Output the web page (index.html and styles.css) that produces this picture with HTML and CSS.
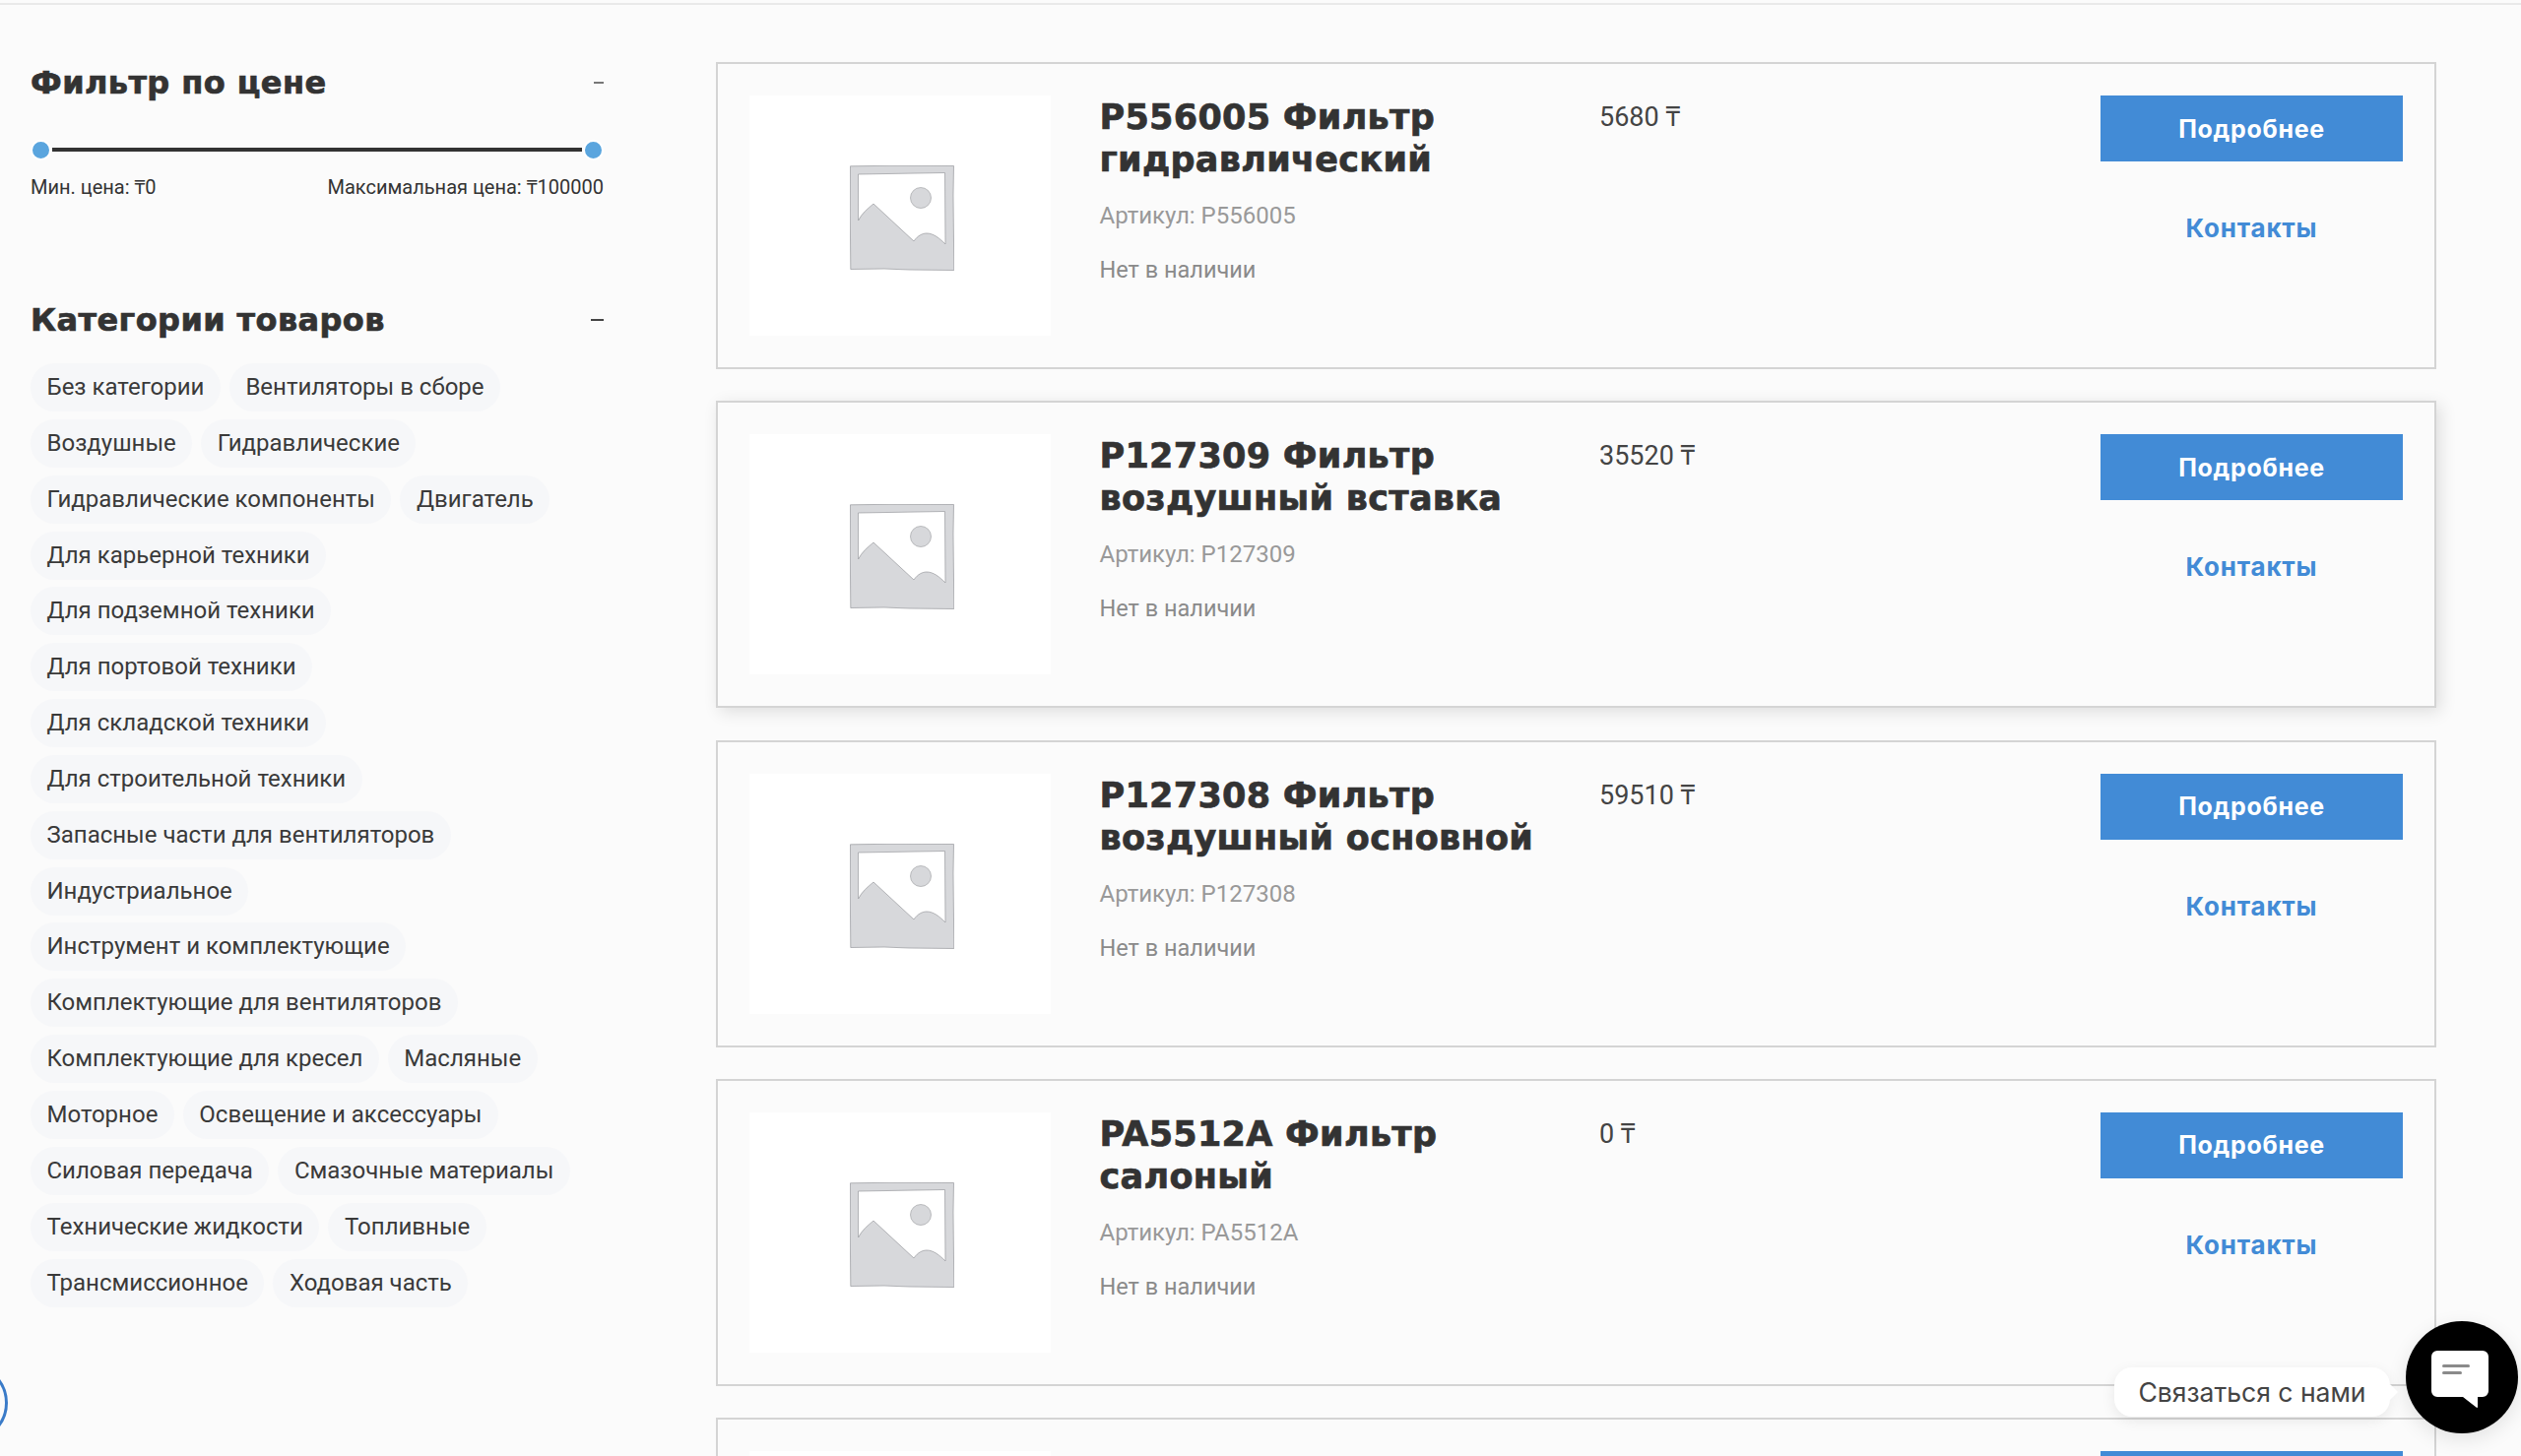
FILE: index.html
```html
<!DOCTYPE html>
<html lang="ru">
<head>
<meta charset="utf-8">
<title>Каталог</title>
<link rel="stylesheet" href="styles.css">
</head>
<body>
<svg class="defs" width="0" height="0" aria-hidden="true">
  <symbol id="ph" viewBox="0 0 106 107">
    <path d="M0.500 0.800 L40 0.300 L105.500 0.500 L105 30 L105.800 106.500 L60 106 L35 105 L0.800 105.500 L0.300 50 Z M8.500 9 L8.600 56 C12 49 18 44 24 39 L65 77 C69 71 74 69 78 69 C85 69 91 74 97 80 L96.500 7.500 L50 8.300 Z" fill="#d7d8db" fill-rule="evenodd" stroke="#98999d" stroke-width="0.7"/>
    <circle cx="72" cy="33" r="10.500" fill="#d7d8db" stroke="#a5a6a9" stroke-width="0.7"/>
  </symbol>
</svg>
<div class="topline"></div>
<div class="page">
  <aside class="sidebar">
    <section class="widget widget-price">
      <div class="widget-head">
        <h2 class="widget-title">Фильтр по цене</h2>
        <span class="dash dash-small"></span>
      </div>
      <div class="slider">
        <span class="handle"></span>
        <span class="track"></span>
        <span class="handle"></span>
      </div>
      <div class="range">
        <span>Мин. цена: ₸0</span>
        <span>Максимальная цена: ₸100000</span>
      </div>
    </section>
    <section class="widget widget-cats">
      <div class="widget-head">
        <h2 class="widget-title">Категории товаров</h2>
        <span class="dash"></span>
      </div>
      <ul class="chips">
        <li class="chip">Без категории</li>
        <li class="chip">Вентиляторы в сборе</li>
        <li class="chip">Воздушные</li>
        <li class="chip">Гидравлические</li>
        <li class="chip">Гидравлические компоненты</li>
        <li class="chip">Двигатель</li>
        <li class="chip">Для карьерной техники</li>
        <li class="chip">Для подземной техники</li>
        <li class="chip">Для портовой техники</li>
        <li class="chip">Для складской техники</li>
        <li class="chip">Для строительной техники</li>
        <li class="chip">Запасные части для вентиляторов</li>
        <li class="chip">Индустриальное</li>
        <li class="chip">Инструмент и комплектующие</li>
        <li class="chip">Комплектующие для вентиляторов</li>
        <li class="chip">Комплектующие для кресел</li>
        <li class="chip">Масляные</li>
        <li class="chip">Моторное</li>
        <li class="chip">Освещение и аксессуары</li>
        <li class="chip">Силовая передача</li>
        <li class="chip">Смазочные материалы</li>
        <li class="chip">Технические жидкости</li>
        <li class="chip">Топливные</li>
        <li class="chip">Трансмиссионное</li>
        <li class="chip">Ходовая часть</li>
      </ul>
    </section>
  </aside>
  <main class="products">
    <article class="card">
      <div class="thumb"><svg class="ph"><use href="#ph"/></svg></div>
      <div class="info">
        <h3 class="name">P556005 Фильтр гидравлический</h3>
        <p class="sku">Артикул: P556005</p>
        <p class="stock">Нет в наличии</p>
      </div>
      <div class="price">5680 ₸</div>
      <div class="actions"><a class="btn">Подробнее</a><a class="contact">Контакты</a></div>
    </article>
    <article class="card card-hover">
      <div class="thumb"><svg class="ph"><use href="#ph"/></svg></div>
      <div class="info">
        <h3 class="name">P127309 Фильтр воздушный вставка</h3>
        <p class="sku">Артикул: P127309</p>
        <p class="stock">Нет в наличии</p>
      </div>
      <div class="price">35520 ₸</div>
      <div class="actions"><a class="btn">Подробнее</a><a class="contact">Контакты</a></div>
    </article>
    <article class="card">
      <div class="thumb"><svg class="ph"><use href="#ph"/></svg></div>
      <div class="info">
        <h3 class="name">P127308 Фильтр воздушный основной</h3>
        <p class="sku">Артикул: P127308</p>
        <p class="stock">Нет в наличии</p>
      </div>
      <div class="price">59510 ₸</div>
      <div class="actions"><a class="btn">Подробнее</a><a class="contact">Контакты</a></div>
    </article>
    <article class="card">
      <div class="thumb"><svg class="ph"><use href="#ph"/></svg></div>
      <div class="info">
        <h3 class="name">PA5512A Фильтр салоный</h3>
        <p class="sku">Артикул: PA5512A</p>
        <p class="stock">Нет в наличии</p>
      </div>
      <div class="price">0 ₸</div>
      <div class="actions"><a class="btn">Подробнее</a><a class="contact">Контакты</a></div>
    </article>
    <article class="card">
      <div class="thumb"></div>
      <div class="info"></div>
      <div class="price"></div>
      <div class="actions"><a class="btn"></a></div>
    </article>
  </main>
</div>
<div class="ring"></div>
<div class="chat">
  <div class="chat-label">Связаться с нами</div>
  <div class="chat-btn">
    <svg class="chat-icon" width="58" height="58" viewBox="0 0 58 58" aria-hidden="true">
      <path d="M6 0 H52 A6 6 0 0 1 58 6 V41 A6 6 0 0 1 52 47 H47 V57 Q47 58.500 45.500 57.500 L32 47 H6 A6 6 0 0 1 0 41 V6 A6 6 0 0 1 6 0 Z" fill="#fff"/>
      <rect x="11" y="14" width="28" height="3" rx="1.500" fill="#8a8a8a"/>
      <rect x="11" y="21" width="20" height="3" rx="1.500" fill="#8a8a8a"/>
    </svg>
  </div>
</div>
</body>
</html>
```

FILE: styles.css
```css
* { box-sizing: border-box; }
html, body { margin: 0; padding: 0; height: 1479px; overflow: hidden; background: #fbfbfb; }
body { font-family: Roboto, "Noto Sans", sans-serif; color: #333; position: relative; }
.defs { position: absolute; }
.topline { height: 5px; border-bottom: 2px solid #e9e9e9; }
.page { display: flex; align-items: flex-start; padding: 58px 0 0 31px; }

.sidebar { width: 582px; flex: none; padding-top: 1px; }
.widget-head { display: flex; justify-content: space-between; align-items: center; }
.widget-title { margin: 0; font-family: "DejaVu Sans", sans-serif; font-weight: 700; font-size: 32px; line-height: 40px; letter-spacing: .4px; -webkit-text-stroke: .7px #333; color: #333; }
.dash { width: 13px; height: 2px; background: #444; }
.dash-small { width: 10px; background: #777; }
.slider { display: flex; align-items: center; margin-top: 38px; height: 20px; }
.handle { width: 21px; height: 21px; flex: none; border-radius: 50%; background: #5aa5de; border: 2px solid #fff; }
.track { flex: 1; height: 4px; background: #333; margin: 0 1px; }
.range { display: flex; justify-content: space-between; margin-top: 15px; font-size: 20px; line-height: 26px; color: #333; }
.widget-cats { margin-top: 102px; }
.chips { list-style: none; margin: 24px 0 0; padding: 0; display: flex; flex-wrap: wrap; gap: 7.850px 9px; }
.chip { height: 49px; line-height: 49px; padding: 0 16.500px; border-radius: 25px; background: #f6f7f9; font-size: 24px; color: #3a3a3a; white-space: nowrap; }

.products { margin-left: 114px; width: 1747px; flex: none; display: flex; flex-direction: column; gap: 32.330px; }
.card { height: 312px; flex: none; border: 2px solid #d4d4d4; padding: 32px; display: flex; background: #fbfbfb; }
.card-hover { box-shadow: 4px 4px 16px rgba(0,0,0,.12); }
.thumb { width: 306px; height: 244px; flex: none; background: #fff; display: flex; align-items: center; justify-content: center; }
.ph { width: 106px; height: 107px; margin: 5px 0 0 4px; }
.info { width: 460px; flex: none; margin-left: 49.500px; }
.name { margin: 1px 0 0; font-family: "DejaVu Sans", sans-serif; font-weight: 700; font-size: 35px; line-height: 43px; letter-spacing: .3px; -webkit-text-stroke: .7px #333; color: #333; }
.sku { margin: 20px 0 0; font-size: 24px; line-height: 30px; color: #999; }
.stock { margin: 25px 0 0; font-size: 23.500px; line-height: 30px; color: #8a8a8a; }
.price { flex: 1; margin-left: 47.500px; font-size: 27px; line-height: 45px; color: #444; }
.actions { width: 307px; flex: none; display: flex; flex-direction: column; align-items: center; }
.btn { width: 100%; height: 67px; background: #428bd6; color: #fff; display: flex; align-items: center; justify-content: center; font-family: Inter, sans-serif; font-weight: 700; font-size: 25px; letter-spacing: .7px; }
.contact { margin-top: 50px; line-height: 36px; color: #428bd6; font-family: Inter, sans-serif; font-weight: 700; font-size: 26px; letter-spacing: .8px; }

.ring { position: absolute; left: -72px; top: 1385px; width: 80px; height: 80px; border-radius: 50%; border: 3px solid #3a7bc8; }
.chat { position: absolute; left: 2147px; top: 1342px; display: flex; align-items: center; }
.chat-label { position: relative; width: 280px; height: 50px; margin-top: 30px; background: #fff; border-radius: 18px; box-shadow: 0 4px 14px rgba(0,0,0,.08); display: flex; align-items: center; justify-content: center; font-family: Inter, sans-serif; font-size: 26.500px; color: #444; }
.chat-label::after { content: ""; position: absolute; right: -8px; top: 17px; border-left: 8px solid #fff; border-top: 8px solid transparent; border-bottom: 8px solid transparent; }
.chat-btn { width: 114px; height: 114px; margin-left: 16px; border-radius: 50%; background: #000; display: flex; align-items: center; justify-content: center; box-shadow: 0 6px 20px rgba(0,0,0,.1); }
.chat-icon { margin: 4px 4px 0 0; }
```
